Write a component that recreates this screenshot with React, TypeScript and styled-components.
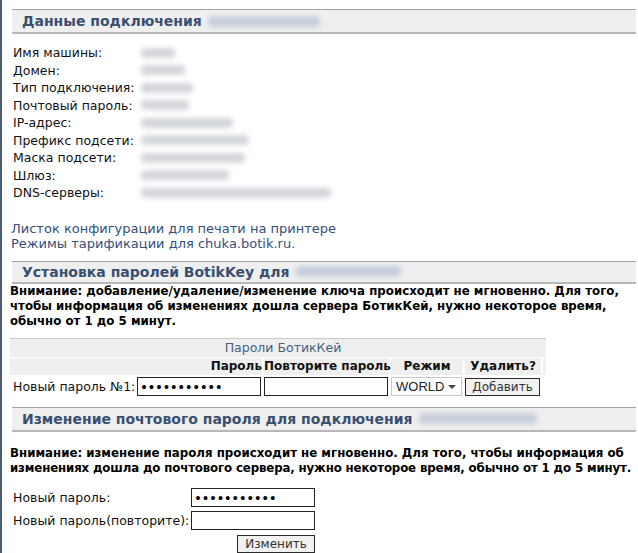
import React from "react";
import styled, { createGlobalStyle } from "styled-components";

const Global = createGlobalStyle`
  html, body { margin: 0; padding: 0; background: #fff; }
  body { font-family: "DejaVu Sans", Verdana, sans-serif; font-size: 12.5px; color: #111; }
`;

const Page = styled.div`
  width: 638px;
  height: 553px;
  box-sizing: border-box;
  border-left: 2px solid #4b5b72;
  padding: 9px 2px 0 8px;
  overflow: hidden;
`;

const SectionHeader = styled.div<{ $top?: number; $h?: number }>`
  margin: ${(p) => p.$top ?? 0}px 0 0 2px;
  height: ${(p) => p.$h ?? 25}px;
  box-sizing: border-box;
  background: #efefef;
  border-top: 1px solid #a3a3a3;
  border-bottom: 2px solid #b8b8b8;
  display: flex;
  align-items: center;
  padding-left: 10px;
  font-size: 14px;
  font-weight: bold;
  color: #3a4f6f;
  white-space: nowrap;
`;

const Blur = styled.span<{ $w: number; $c?: string; $h?: number }>`
  display: inline-block;
  width: ${(p) => p.$w}px;
  height: ${(p) => p.$h ?? 10}px;
  margin-left: 6px;
  border-radius: 4px;
  background: ${(p) => p.$c ?? "#c6cedc"};
  filter: blur(2.5px);
`;

const InfoGrid = styled.div`
  margin-top: 10px;
  display: grid;
  grid-template-columns: 122px 1fr;
  grid-auto-rows: 17.5px;
  align-items: center;
  padding-left: 3px;
`;

const Label = styled.div`
  white-space: nowrap;
  line-height: 15px;
`;

const Value = styled.div`
  display: flex;
  align-items: center;
`;

const Links = styled.div`
  margin-top: 19px;
  padding-left: 1px;
  display: flex;
  flex-direction: column;
  font-size: 13px;
`;

const Link = styled.a`
  color: #34507a;
  text-decoration: none;
  line-height: 15px;
  cursor: pointer;
`;

const Warning = styled.div<{ $top: number }>`
  margin: ${(p) => p.$top}px 0 0 0;
  font-size: 11.8px;
  font-weight: bold;
  line-height: 15px;
  color: #000;
`;

const Line = styled.span<{ $ls?: number }>`
  display: block;
  white-space: nowrap;
  letter-spacing: ${(p) => p.$ls ?? 0}px;
`;

const KeyTable = styled.div`
  margin-top: 9px;
  width: 536px;
  display: grid;
  grid-template-columns: 125px 125px 125px 72px 76px 3px;
  column-gap: 2px;
  row-gap: 1px;
`;

const Caption = styled.div`
  grid-column: 1 / -1;
  background: #efefef;
  border-top: 1px solid #c8c8c8;
  height: 18px;
  line-height: 18px;
  text-align: center;
  color: #465f82;
  padding-left: 10px;
`;

const HeadCell = styled.div<{ $align?: string; $span?: number }>`
  background: #efefef;
  font-weight: bold;
  font-size: 12px;
  height: 17px;
  line-height: 16px;
  white-space: nowrap;
  text-align: ${(p) => p.$align ?? "center"};
  grid-column: span ${(p) => p.$span ?? 1};
`;

const Cell = styled.div<{ $pad?: number }>`
  display: flex;
  align-items: center;
  height: 22px;
  white-space: nowrap;
  padding-left: ${(p) => p.$pad ?? 0}px;
`;

const TextInput = styled.input`
  box-sizing: border-box;
  width: 124px;
  height: 19px;
  border: 1px solid #222;
  padding: 0 2px;
  font-family: "DejaVu Sans", Verdana, sans-serif;
  font-size: 13.5px;
  letter-spacing: -0.5px;
  outline: none;
  background: #fff;
`;

const SelectWrap = styled.div`
  position: relative;
  width: 71px;
  height: 19px;
`;

const Select = styled.select`
  appearance: none;
  box-sizing: border-box;
  width: 100%;
  height: 100%;
  border: 1px solid #c8c8c8;
  background: #fff;
  padding: 0 0 0 4px;
  font-family: "Liberation Sans", Arial, sans-serif;
  font-size: 13px;
  color: #222;
`;

const Arrow = styled.span`
  position: absolute;
  right: 6px;
  top: 8px;
  width: 0;
  height: 0;
  border-left: 4px solid transparent;
  border-right: 4px solid transparent;
  border-top: 4px solid #444;
  pointer-events: none;
`;

const Button = styled.button<{ $w: number }>`
  box-sizing: border-box;
  width: ${(p) => p.$w}px;
  height: 18px;
  border: 1px solid #2b2b2b;
  background: #f1f1f1;
  font-family: "DejaVu Sans", Verdana, sans-serif;
  font-size: 12px;
  color: #333;
  padding: 0;
  line-height: 16px;
`;

const MailForm = styled.div`
  margin-top: 11px;
  padding-left: 3px;
  display: grid;
  grid-template-columns: 178px 124px;
  grid-template-rows: 22px 22px 23px;
  row-gap: 1px;
  align-items: center;
`;

const ButtonCell = styled.div`
  grid-column: 2;
  display: flex;
  justify-content: flex-end;
`;

const info: [string, number][] = [
  ["Имя машины:", 34],
  ["Домен:", 44],
  ["Тип подключения:", 52],
  ["Почтовый пароль:", 48],
  ["IP-адрес:", 92],
  ["Префикс подсети:", 108],
  ["Маска подсети:", 104],
  ["Шлюз:", 88],
  ["DNS-серверы:", 190],
];

export default function App() {
  return (
    <Page>
      <Global />
      <SectionHeader>
        Данные подключения <Blur $w={112} $h={11} />
      </SectionHeader>
      <InfoGrid>
        {info.map(([l, w]) => (
          <React.Fragment key={l}>
            <Label>{l}</Label>
            <Value>
              <Blur $w={w} $c="#d3d6dc" />
            </Value>
          </React.Fragment>
        ))}
      </InfoGrid>
      <Links>
        <Link>Листок конфигурации для печати на принтере</Link>
        <Link>Режимы тарификации для chuka.botik.ru.</Link>
      </Links>
      <SectionHeader $top={10} $h={23}>
        Установка паролей BotikKey для <Blur $w={105} $h={11} />
      </SectionHeader>
      <Warning $top={0}>
        <Line>Внимание: добавление/удаление/изменение ключа происходит не мгновенно. Для того,</Line>
        <Line>чтобы информация об изменениях дошла сервера БотикКей, нужно некоторое время,</Line>
        <Line>обычно от 1 до 5 минут.</Line>
      </Warning>
      <KeyTable>
        <Caption>Пароли БотикКей</Caption>
        <HeadCell $align="right" $span={2}>Пароль</HeadCell>
        <HeadCell>Повторите пароль</HeadCell>
        <HeadCell>Режим</HeadCell>
        <HeadCell>Удалить?</HeadCell>
        <HeadCell />
        <Cell $pad={3}>Новый пароль №1:</Cell>
        <Cell>
          <TextInput type="password" defaultValue="abcdefghijk" />
        </Cell>
        <Cell>
          <TextInput type="password" />
        </Cell>
        <Cell>
          <SelectWrap>
            <Select defaultValue="WORLD">
              <option>WORLD</option>
              <option>LOCAL</option>
            </Select>
            <Arrow />
          </SelectWrap>
        </Cell>
        <Cell>
          <Button $w={75}>Добавить</Button>
        </Cell>
        <Cell />
      </KeyTable>
      <SectionHeader $top={9}>
        Изменение почтового пароля для подключения <Blur $w={118} $h={11} />
      </SectionHeader>
      <Warning $top={14}>
        <Line>Внимание: изменение пароля происходит не мгновенно. Для того, чтобы информация об</Line>
        <Line $ls={-0.15}>изменениях дошла до почтового сервера, нужно некоторое время, обычно от 1 до 5 минут.</Line>
      </Warning>
      <MailForm>
        <Label>Новый пароль:</Label>
        <TextInput type="password" defaultValue="abcdefghijk" />
        <Label>Новый пароль(повторите):</Label>
        <TextInput type="password" />
        <ButtonCell>
          <Button $w={78}>Изменить</Button>
        </ButtonCell>
      </MailForm>
    </Page>
  );
}
